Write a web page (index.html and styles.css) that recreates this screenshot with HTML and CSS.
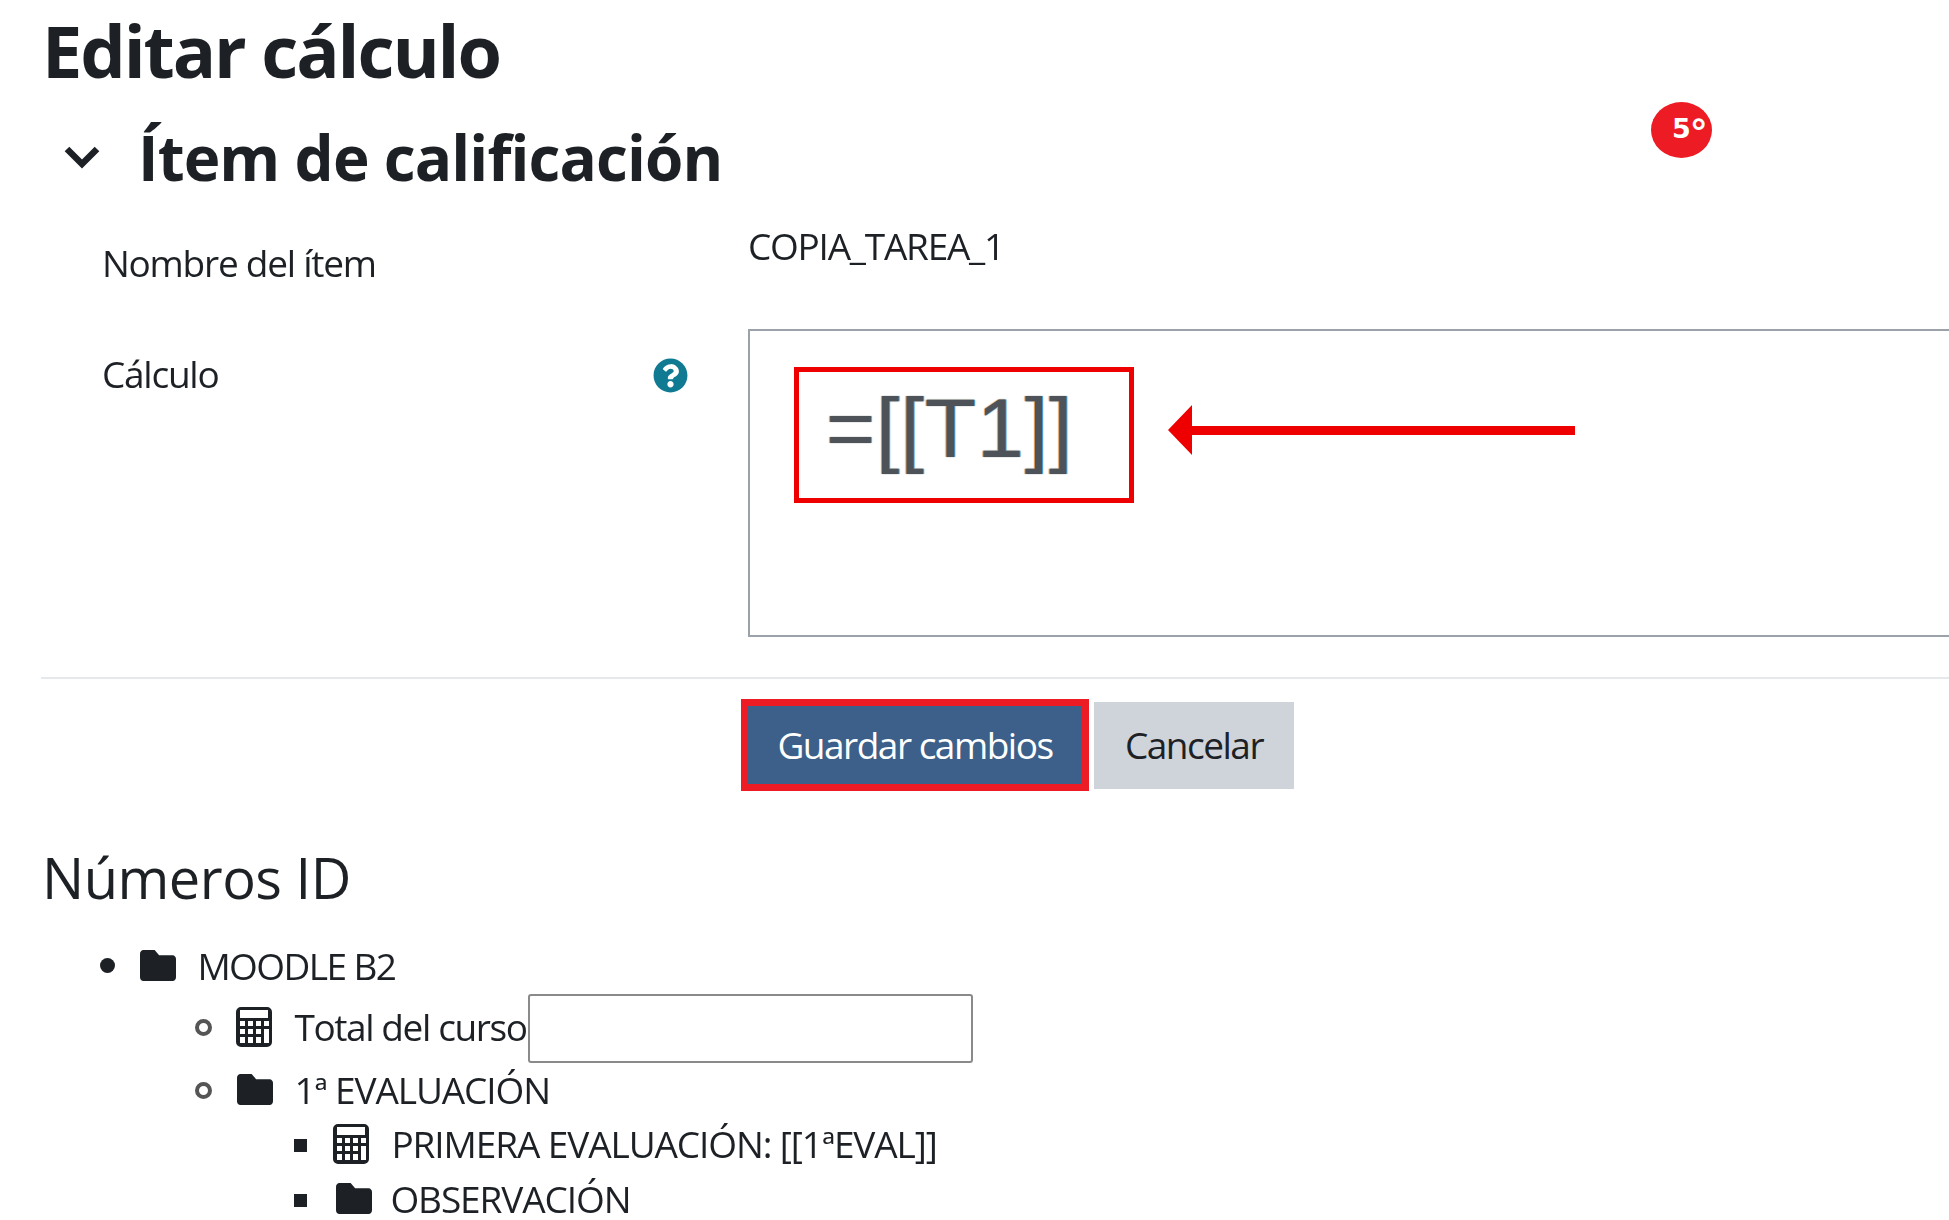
FILE: index.html
```html
<!DOCTYPE html>
<html lang="es">
<head>
<meta charset="utf-8">
<title>Editar cálculo</title>
<link rel="stylesheet" href="styles.css">
</head>
<body>
<main class="page">
  <h1 class="title">Editar cálculo</h1>
  <div class="section-head">
    <svg class="chevron" viewBox="0 0 38 24"><polyline points="4,4 19,19 34,4"/></svg>
    <h2 class="section-title">Ítem de calificación</h2>
  </div>
  <div class="badge">5<span class="deg">°</span></div>
  <div class="row row-name">
    <div class="label">Nombre del ítem</div>
    <div class="value">COPIA_TAREA_1</div>
  </div>
  <div class="row row-calc">
    <div class="label label-calc">
      <span>Cálculo</span>
      <svg class="help" viewBox="0 0 512 512"><path d="M504 256c0 136.997-111.043 248-248 248S8 392.997 8 256C8 119.083 119.043 8 256 8s248 111.083 248 248zM262.655 90c-54.497 0-89.255 22.957-116.549 63.758-3.536 5.286-2.353 12.415 2.715 16.258l34.699 26.31c5.205 3.947 12.621 3.008 16.665-2.122 17.864-22.658 30.113-35.797 57.303-35.797 20.429 0 45.698 13.148 45.698 32.958 0 14.976-12.363 22.667-32.534 33.976C247.128 238.528 216 254.941 216 296v4c0 6.627 5.373 12 12 12h56c6.627 0 12-5.373 12-12v-1.333c0-28.462 83.186-29.647 83.186-106.667 0-58.002-60.165-106-116.531-106zM256 338c-25.365 0-46 20.635-46 46 0 25.364 20.635 46 46 46s46-20.636 46-46c0-25.365-20.635-46-46-46z"/></svg>
    </div>
    <div class="calc-box">
      <div class="callout"><span class="formula">=[[T1]]</span></div>
      <svg class="arrow" viewBox="0 0 407 50"><path d="M0 25 24 0V21H407V30H24V50Z"/></svg>
    </div>
  </div>
  <hr class="divider">
  <div class="actions">
    <button class="btn btn-primary" type="button">Guardar cambios</button>
    <button class="btn btn-secondary" type="button">Cancelar</button>
  </div>
  <h3 class="ids-title">Números ID</h3>
  <ul class="tree">
    <li>
      <svg class="icon folder" viewBox="0 64 512 384" preserveAspectRatio="none"><path d="M464 128H272l-64-64H48C21.49 64 0 85.49 0 112v288c0 26.51 21.49 48 48 48h416c26.51 0 48-21.51 48-48V176c0-26.51-21.49-48-48-48z"/></svg>
      <span class="node node-tight">MOODLE B2</span>
      <ul class="level-2">
        <li class="with-input">
          <svg class="icon calc" viewBox="0 0 36 40"><path fill-rule="evenodd" d="M5 0H31A5 5 0 0 1 36 5V35A5 5 0 0 1 31 40H5A5 5 0 0 1 0 35V5A5 5 0 0 1 5 0ZM4 3V11H32V3ZM4 14V19H9V14ZM12 14V19H17V14ZM20 14V19H25V14ZM28 14V19H33V14ZM4 22V27H9V22ZM12 22V27H17V22ZM20 22V27H25V22ZM28 22V36H33V22ZM4 30V36H9V30ZM12 30V36H17V30ZM20 30V36H25V30Z"/></svg>
          <span class="node">Total del curso</span><input class="id-input" type="text">
        </li>
        <li>
          <svg class="icon folder" viewBox="0 64 512 384" preserveAspectRatio="none"><path d="M464 128H272l-64-64H48C21.49 64 0 85.49 0 112v288c0 26.51 21.49 48 48 48h416c26.51 0 48-21.51 48-48V176c0-26.51-21.49-48-48-48z"/></svg>
          <span class="node node-wide">1ª EVALUACIÓN</span>
          <ul class="level-3">
            <li>
              <svg class="icon calc" viewBox="0 0 36 40"><path fill-rule="evenodd" d="M5 0H31A5 5 0 0 1 36 5V35A5 5 0 0 1 31 40H5A5 5 0 0 1 0 35V5A5 5 0 0 1 5 0ZM4 3V11H32V3ZM4 14V19H9V14ZM12 14V19H17V14ZM20 14V19H25V14ZM28 14V19H33V14ZM4 22V27H9V22ZM12 22V27H17V22ZM20 22V27H25V22ZM28 22V36H33V22ZM4 30V36H9V30ZM12 30V36H17V30ZM20 30V36H25V30Z"/></svg>
              <span class="node node-wide">PRIMERA EVALUACIÓN: [[1ªEVAL]]</span>
            </li>
            <li>
              <svg class="icon folder" viewBox="0 64 512 384" preserveAspectRatio="none"><path d="M464 128H272l-64-64H48C21.49 64 0 85.49 0 112v288c0 26.51 21.49 48 48 48h416c26.51 0 48-21.51 48-48V176c0-26.51-21.49-48-48-48z"/></svg>
              <span class="node node-wide">OBSERVACIÓN</span>
            </li>
          </ul>
        </li>
      </ul>
    </li>
  </ul>
</main>
</body>
</html>
```
FILE: styles.css
```css
*, *::before { box-sizing: border-box; }
html, body { margin: 0; background: #fff; }
body {
  height: 1220px;
  overflow: hidden;
  font-family: "Open Sans", "Noto Sans", sans-serif;
  font-size: 37px;
  line-height: 55px;
  color: #1d2125;
  letter-spacing: -1.4px;
}
.page { position: relative; padding-left: 41px; }
.title, .section-title, .label, .value, .btn, .ids-title, .node { filter: blur(0.45px); }
.title {
  margin: 0;
  padding: 3px 0 0 1px;
  font-size: 72px;
  line-height: 94px;
  font-weight: 700;
  letter-spacing: -2.1px;
}
.section-head { display: flex; align-items: center; height: 80px; margin-top: 20px; padding-left: 22px; }
.chevron { width: 38px; height: 24px; fill: none; stroke: #1d2125; stroke-width: 6.5; }
.section-title {
  margin: 0 0 0 37px;
  font-size: 62px;
  line-height: 80px;
  font-weight: 700;
  letter-spacing: -0.9px;
}
.badge {
  position: absolute;
  left: 1651px;
  top: 102px;
  width: 61px;
  height: 56px;
  border-radius: 50%;
  background: #ed1c24;
  color: #fff;
  font-family: "DejaVu Sans", sans-serif;
  font-weight: 700;
  font-size: 27px;
  line-height: 54px;
  letter-spacing: 0;
  padding-left: 21px;
}
.deg { font-size: 36px; line-height: 0; vertical-align: -7px; margin-left: -1px; }
.row { display: flex; }
.row-name { margin-top: 28px; height: 104px; }
.row-calc { height: 308px; margin-top: 0; }
.label { width: 707px; padding-left: 61px; letter-spacing: -1.25px; }
.value { margin-top: -7px; letter-spacing: -1.25px; }
.row-name .label { padding-top: 10px; }
.label-calc { display: flex; justify-content: space-between; align-items: flex-start; padding-right: 60px; padding-top: 17px; filter: none; }
.label-calc span { filter: blur(0.45px); }
.help { width: 35px; height: 35px; fill: #0f7a92; margin-top: 12px; }
.calc-box {
  position: relative;
  flex: 1;
  border: 2px solid #9ca2aa;
  border-right: 0;
}
.callout {
  position: absolute;
  left: 44px;
  top: 36px;
  width: 340px;
  height: 136px;
  border: 5px solid #ee0000;
  display: flex;
  align-items: center;
}
.formula {
  padding: 0 0 14px 27px;
  font-family: "Liberation Sans", Arial, sans-serif;
  font-size: 84px;
  line-height: 1;
  letter-spacing: 1px;
  color: #4d5359;
  text-shadow: -1px 0 1px #d9924a, 1px 0 1px #3a9bdc;
  filter: blur(0.7px);
}
.arrow { position: absolute; left: 418px; top: 74px; width: 407px; height: 50px; fill: #ee0000; }
.divider { border: 0; border-top: 2px solid #e6e9ec; margin: 40px 0 0; }
.actions { display: flex; align-items: center; gap: 5px; margin: 20px 0 0 700px; }
.btn {
  font: inherit;
  letter-spacing: -1.5px;
  border: 0;
  padding: 0 0 2px;
  border-radius: 0;
}
.btn-primary { width: 348px; height: 92px; background: #3c6089; border: 7px solid #ed1c24; color: #fff; filter: none; }
.btn-secondary { width: 200px; height: 87px; background: #ced4da; color: #1d2125; filter: none; }
.ids-title {
  margin: 48px 0 0 1px;
  font-size: 56px;
  line-height: 76px;
  font-weight: 400;
  letter-spacing: -0.5px;
}
.tree { margin: 23px 0 0; padding-left: 99px; list-style: none; }
.tree ul { margin: 0; list-style: none; padding-left: 96px; }
.tree ul.level-3 { padding-left: 97px; margin-top: -1px; }
.tree li { line-height: 55px; }
.tree li::before {
  content: "";
  display: inline-block;
  width: 15px;
  height: 15px;
  margin-left: -40px;
  margin-right: 17px;
  vertical-align: 7px;
  border-radius: 50%;
  background: #1d2125;
}
.level-2 > li::before {
  width: 17px;
  height: 17px;
  margin-left: -41px;
  margin-right: 16px;
  vertical-align: 5px;
  background: transparent;
  border: 4px solid #555;
}
.tree .level-3 > li::before {
  width: 13px;
  height: 13px;
  margin-left: -39px;
  margin-right: 18px;
  vertical-align: 6px;
  border: 0;
  border-radius: 0;
  background: #1d2125;
}
.node-wide { letter-spacing: -1.1px; }
.node-tight { letter-spacing: -1.6px; }
.icon { fill: #1d2125; }
.folder { width: 36px; height: 31px; vertical-align: -1px; margin-right: 13px; }
.level-2 .folder { margin-left: 1px; }
.tree .level-3 .folder { margin-left: 3px; margin-right: 10px; }
.calc { width: 36px; height: 40px; vertical-align: -6px; margin-right: 14px; }
.id-input {
  width: 445px;
  height: 69px;
  margin: 0 0 0 1px;
  vertical-align: 8px;
  border: 2px solid #8a8a8a;
  border-radius: 3px;
  background: #fff;
}
.with-input { height: 68px; margin-top: 1px; }
```
